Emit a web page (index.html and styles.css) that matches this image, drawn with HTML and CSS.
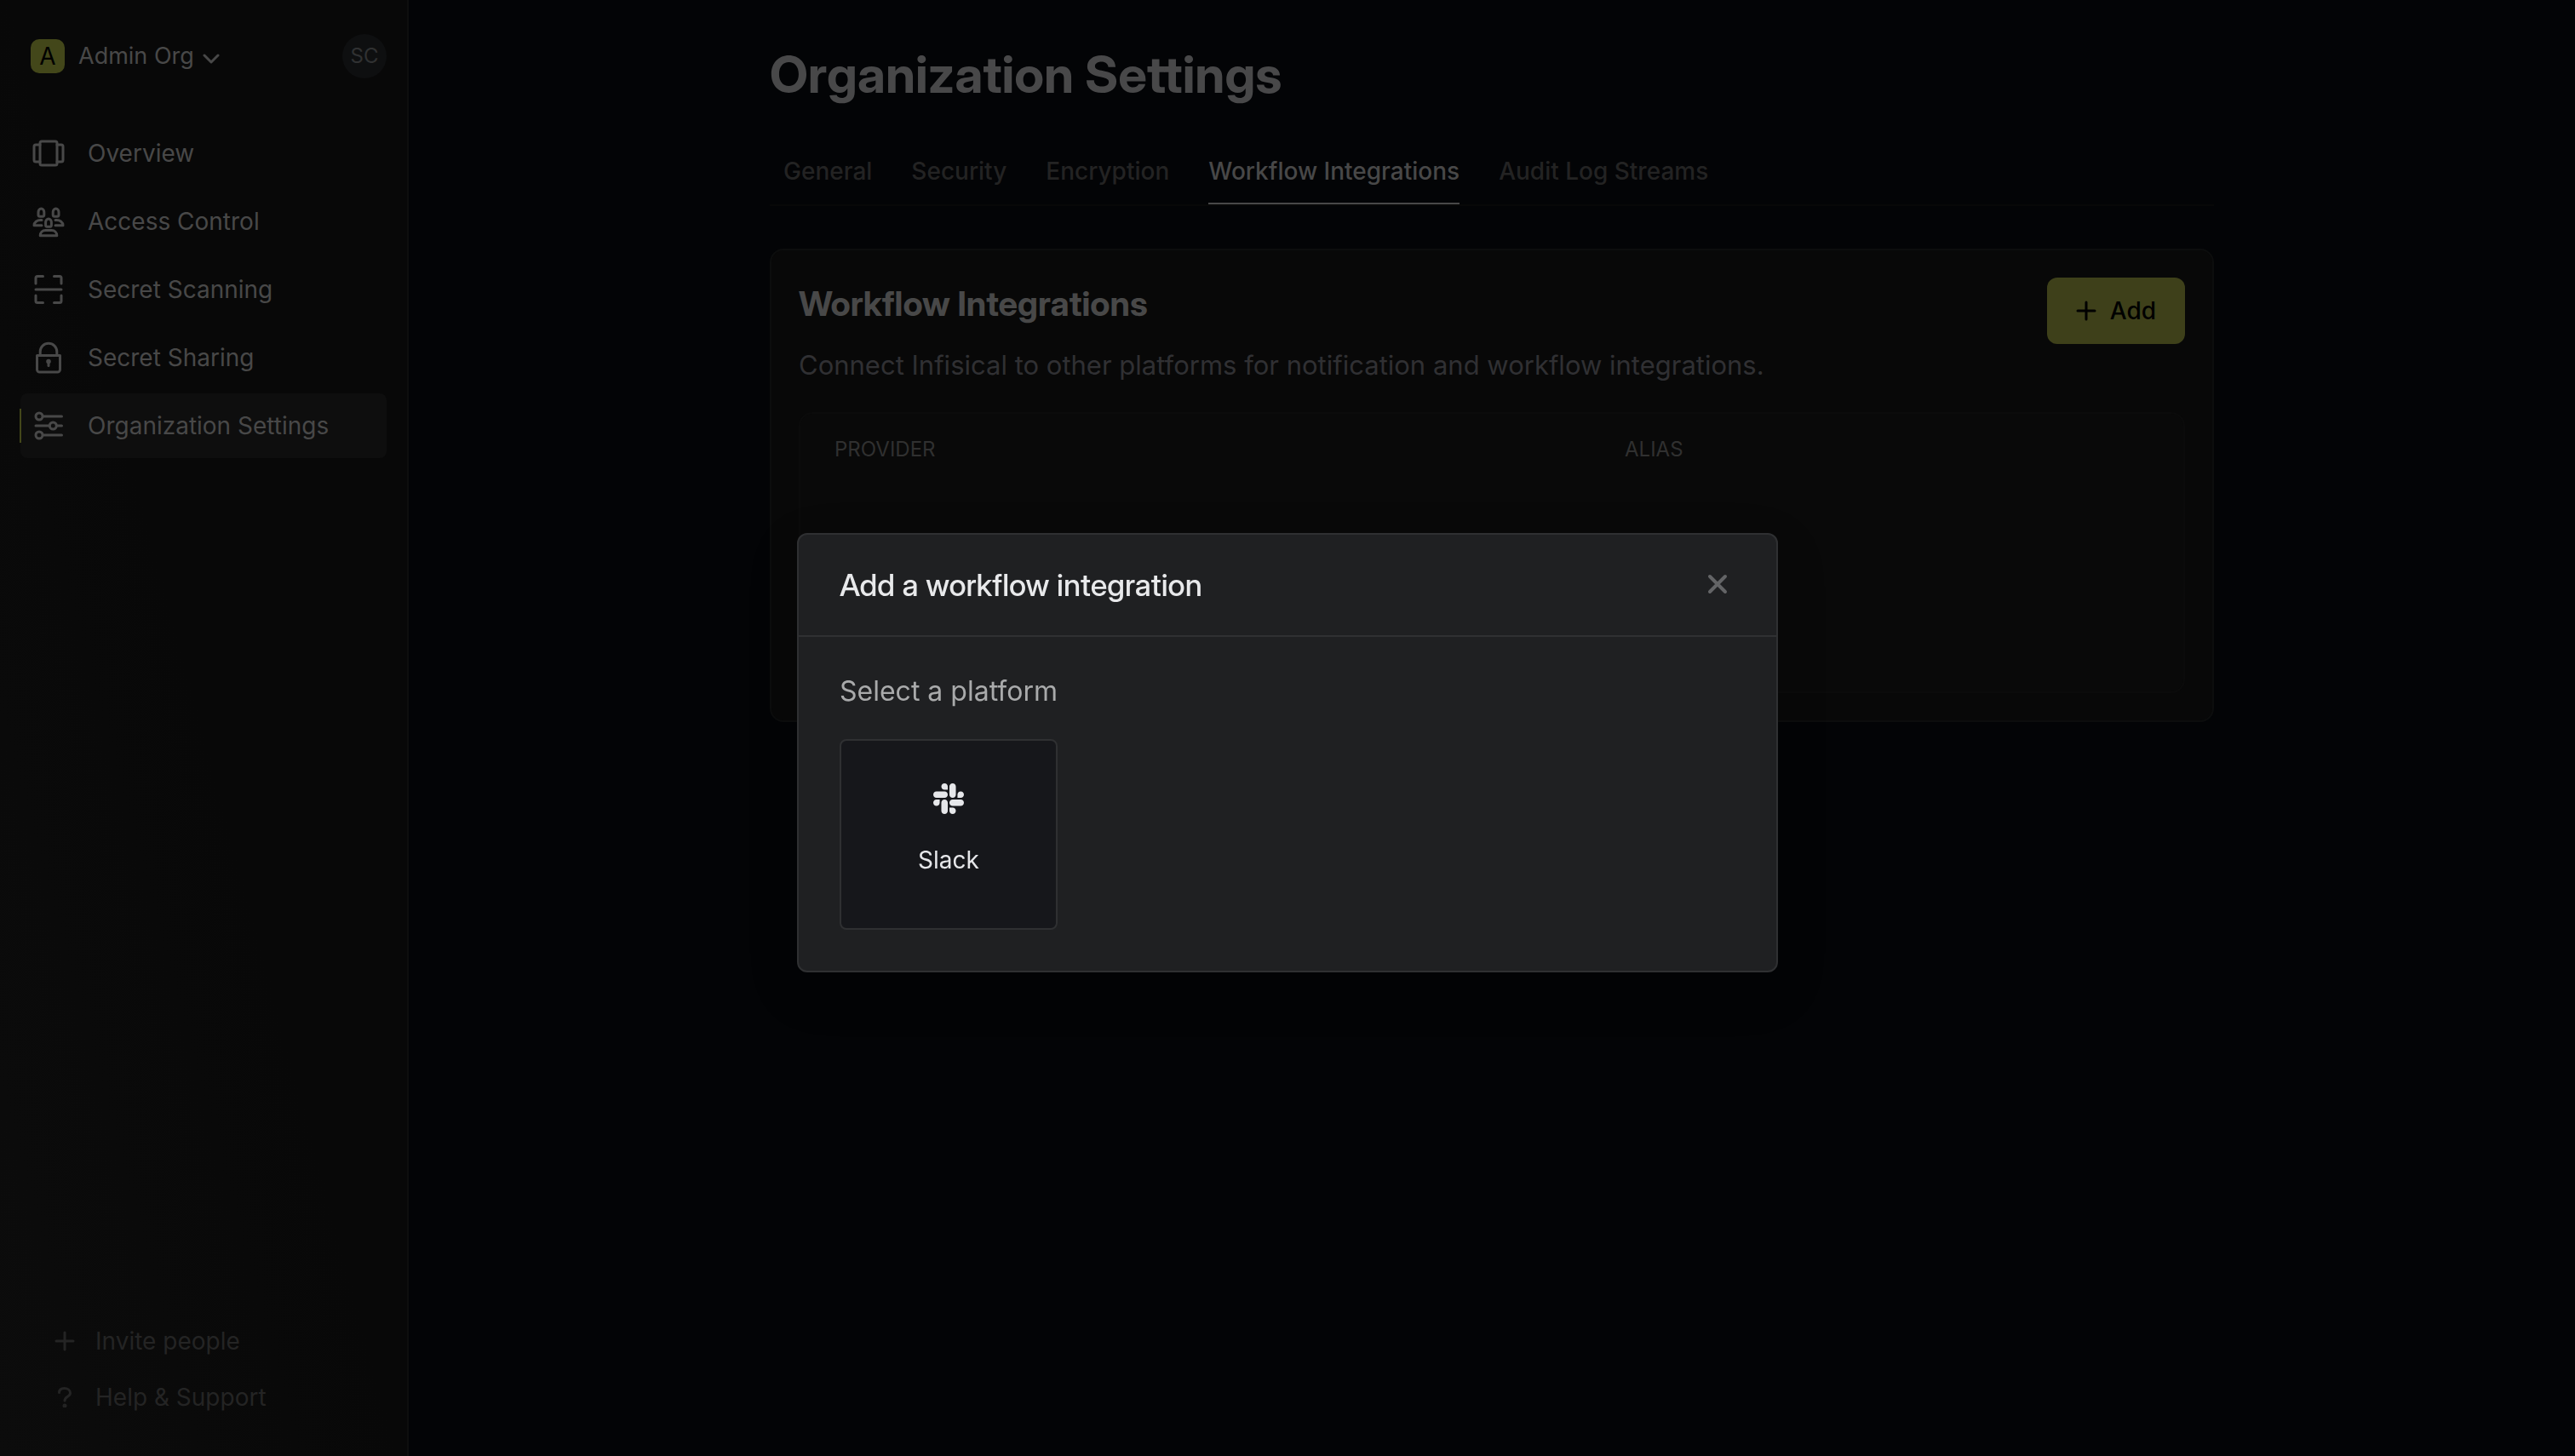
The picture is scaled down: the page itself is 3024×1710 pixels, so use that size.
FILE: index.html
```html
<!DOCTYPE html>
<html lang="en">
<head>
<meta charset="utf-8">
<title>Organization Settings</title>
<link rel="stylesheet" href="styles.css">
</head>
<body>
<div class="app">
  <aside class="sidebar">
    <div class="org">
      <button class="org-switch" type="button">
        <span class="org-badge">A</span>
        <span class="org-name">Admin Org</span>
        <svg class="chevron" viewBox="0 0 20 12"><path d="M2 2l8 8 8-8"/></svg>
      </button>
      <button class="avatar" type="button">SC</button>
    </div>
    <nav class="nav">
      <a class="nav-item" href="#">
        <svg class="nav-icon" viewBox="0 0 42 42"><rect x="11" y="7" width="20" height="28" rx="2"/><path d="M11 11H6a2 2 0 0 0-2 2v16a2 2 0 0 0 2 2h5M31 11h5a2 2 0 0 1 2 2v16a2 2 0 0 1-2 2h-5"/></svg>
        Overview
      </a>
      <a class="nav-item" href="#">
        <svg class="nav-icon" viewBox="0 0 42 42"><path d="M9 10a3.4 4 0 0 1 6.8 0v3.6a1.6 1.6 0 0 1-1.6 1.6h-3.6A1.6 1.6 0 0 1 9 13.6zM26.2 10a3.4 4 0 0 1 6.8 0v3.6a1.6 1.6 0 0 1-1.6 1.6h-3.6a1.6 1.6 0 0 1-1.6-1.6zM17.6 22a3.4 4 0 0 1 6.8 0v3.6a1.6 1.6 0 0 1-1.6 1.6h-3.6a1.6 1.6 0 0 1-1.6-1.6zM13 19.5h-1.5c-4 0-7.5 2.5-7.5 6.3h9M29 19.5h1.5c4 0 7.500 2.500 7.500 6.300h-9M11.200 37.800c0-3.800 2.500-6.300 6.300-6.300h7c3.800 0 6.300 2.500 6.300 6.300z"/></svg>
        Access Control
      </a>
      <a class="nav-item" href="#">
        <svg class="nav-icon" viewBox="0 0 42 42"><path d="M6 14V7.500A2 2 0 0 1 8 5.500h6.500M27.500 5.500H34a2 2 0 0 1 2 2V14M6 28v6.500a2 2 0 0 0 2 2h6.500M27.500 36.500H34a2 2 0 0 0 2-2V28M6 21h30"/></svg>
        Secret Scanning
      </a>
      <a class="nav-item" href="#">
        <svg class="nav-icon" viewBox="0 0 42 42"><path d="M7.500 18.500h27V35a3 3 0 0 1-3 3h-21a3 3 0 0 1-3-3zM11.200 18.500v-4.500a9.800 9.800 0 0 1 19.600 0v4.500"/><circle class="solid" cx="21" cy="25.500" r="1.300"/><path d="M21 26v4.500"/></svg>
        Secret Sharing
      </a>
      <a class="nav-item active" href="#">
        <svg class="nav-icon" viewBox="0 0 42 42"><circle cx="10" cy="10" r="4"/><circle cx="26.300" cy="21" r="4"/><circle cx="10" cy="32" r="4"/><path d="M14.500 10H36.500M6 21H22M30.500 21h6M14.500 32H36.500"/></svg>
        Organization Settings
      </a>
    </nav>
    <div class="sidebar-foot">
      <button class="foot-item" type="button">
        <svg class="foot-icon" viewBox="0 0 24 24"><path d="M12 2v20M2 12h20"/></svg>
        Invite people
      </button>
      <button class="foot-item" type="button">
        <svg class="foot-icon" viewBox="0 0 24 24"><path d="M5.500 6.500C5.500 3 8 1.500 11.500 1.500s7 1.800 7 5.500c0 4.500-6.500 4.200-6.500 9"/><circle class="solid" cx="12" cy="22" r="1"/></svg>
        Help &amp; Support
      </button>
    </div>
  </aside>

  <main class="main">
    <div class="content">
      <h1 class="title">Organization Settings</h1>
      <div class="tabs" role="tablist">
        <button class="tab" type="button" role="tab">General</button>
        <button class="tab" type="button" role="tab">Security</button>
        <button class="tab" type="button" role="tab">Encryption</button>
        <button class="tab selected" type="button" role="tab" aria-selected="true">Workflow Integrations</button>
        <button class="tab" type="button" role="tab">Audit Log Streams</button>
      </div>
      <section class="card">
        <div class="card-head">
          <h2 class="card-title">Workflow Integrations</h2>
          <button class="add" type="button">
            <svg class="foot-icon" viewBox="0 0 24 24"><path d="M12 2v20M2 12h20"/></svg>
            Add
          </button>
        </div>
        <p class="card-text">Connect Infisical to other platforms for notification and workflow integrations.</p>
        <div class="table-wrap">
          <table class="table">
            <thead>
              <tr><th class="col-provider" scope="col">PROVIDER</th><th scope="col">ALIAS</th></tr>
            </thead>
            <tbody>
              <tr><td class="empty" colspan="2"></td></tr>
            </tbody>
          </table>
        </div>
      </section>
    </div>
  </main>
</div>

<div class="overlay">
  <div class="modal" role="dialog" aria-modal="true" aria-labelledby="modal-title">
    <div class="modal-head">
      <h2 class="modal-title" id="modal-title">Add a workflow integration</h2>
      <button class="close" type="button" aria-label="Close">
        <svg class="close-icon" viewBox="0 0 24 24"><path d="M3 3l18 18M21 3L3 21"/></svg>
      </button>
    </div>
    <div class="modal-body">
      <p class="modal-text">Select a platform</p>
      <button class="platform" type="button">
        <svg class="slack" viewBox="0 32 448 448"><path d="M94.120 315.100c0 25.900-21.160 47.060-47.060 47.060S0 341 0 315.100c0-25.900 21.160-47.060 47.060-47.060h47.060v47.060zm23.720 0c0-25.900 21.160-47.060 47.060-47.060s47.060 21.160 47.060 47.060v117.840c0 25.900-21.160 47.060-47.060 47.060s-47.060-21.160-47.060-47.060V315.100zm47.060-188.980c-25.900 0-47.060-21.160-47.060-47.060S139 32 164.900 32s47.060 21.160 47.060 47.060v47.060H164.900zm0 23.720c25.900 0 47.060 21.160 47.060 47.060s-21.160 47.060-47.060 47.060H47.060C21.160 243.960 0 222.800 0 196.900s21.160-47.060 47.060-47.060H164.900zm188.980 47.060c0-25.900 21.160-47.060 47.060-47.060 25.900 0 47.060 21.160 47.060 47.060s-21.160 47.060-47.060 47.060h-47.060V196.900zm-23.720 0c0 25.900-21.160 47.060-47.060 47.060-25.900 0-47.060-21.160-47.060-47.060V79.060c0-25.900 21.160-47.060 47.060-47.060 25.900 0 47.060 21.160 47.060 47.060V196.900zM283.100 385.880c25.900 0 47.060 21.160 47.060 47.060 0 25.900-21.160 47.060-47.060 47.060-25.900 0-47.060-21.160-47.060-47.060v-47.060h47.060zm0-23.720c-25.900 0-47.060-21.160-47.060-47.060 0-25.900 21.160-47.060 47.060-47.060h117.840c25.900 0 47.060 21.160 47.060 47.060 0 25.900-21.160 47.060-47.060 47.060H283.100z"/></svg>
        Slack
      </button>
    </div>
  </div>
</div>
</body>
</html>
```
FILE: styles.css
```css
* {
  box-sizing: border-box;
}

body {
  margin: 0;
  background: #030406;
  color: #484848;
  font-family: Inter, "Liberation Sans", sans-serif;
  font-size: 28px;
  line-height: 40px;
}

h1, h2, p {
  margin: 0;
}

h1, h2 {
  font-family: "Inter Display", Inter, "Liberation Sans", sans-serif;
}

button {
  margin: 0;
  padding: 0;
  border: 0;
  background: none;
  color: inherit;
  font: inherit;
}

a {
  color: inherit;
  text-decoration: none;
}

svg {
  flex: none;
  fill: none;
  stroke: currentColor;
  stroke-linecap: round;
  stroke-linejoin: round;
}

.solid {
  fill: currentColor;
}

.app {
  display: flex;
  min-height: 100vh;
}

/* Sidebar */
.sidebar {
  display: flex;
  flex: none;
  flex-direction: column;
  width: 480px;
  padding: 40px 24px 36px;
  border-right: 2px solid #0e0e0e;
  background: linear-gradient(75deg, #0c0c0c, #080808 50%, #080808);
}

.org {
  display: flex;
  align-items: center;
  justify-content: space-between;
  margin-bottom: 50px;
  padding-left: 12px;
}

.org-switch {
  display: flex;
  align-items: center;
}

.org-badge {
  width: 40px;
  height: 40px;
  margin-right: 16px;
  border-radius: 10px;
  background: #43471a;
  color: #000;
}

.org-name {
  margin-right: 10px;
  font-size: 27px;
}

.chevron {
  width: 20px;
  height: 12px;
  margin-top: 6px;
  stroke-width: 3;
}

.avatar {
  width: 52px;
  height: 52px;
  border-radius: 50%;
  background: #0e0f10;
  color: #303132;
  font-size: 24px;
}

.nav {
  display: flex;
  flex-direction: column;
  gap: 4px;
}

.nav-item {
  position: relative;
  display: flex;
  align-items: center;
  gap: 25px;
  height: 76px;
  padding: 0 12px;
  border-radius: 8px;
}

.nav-item.active {
  background: #0e0e0e;
}

.nav-item.active::before {
  position: absolute;
  top: 18px;
  left: -1px;
  width: 2px;
  height: 40px;
  background: #43471a;
  content: "";
}

.nav-icon {
  width: 42px;
  height: 42px;
  stroke-width: 3;
}

.sidebar-foot {
  display: flex;
  flex-direction: column;
  align-items: flex-start;
  margin-top: auto;
  padding-left: 40px;
  color: #242424;
}

.foot-item {
  display: flex;
  align-items: center;
  gap: 24px;
  height: 66px;
}

.foot-icon {
  width: 24px;
  height: 24px;
  stroke-width: 3;
}

/* Page */
.main {
  flex: 1;
  min-width: 0;
}

.content {
  max-width: 1696px;
  margin: 0 auto;
  padding-top: 52px;
}

.title {
  margin-bottom: 40px;
  color: #484849;
  font-size: 60px;
  font-weight: 700;
  line-height: 70px;
}

.tabs {
  display: flex;
  gap: 46px;
  margin-bottom: 50px;
  padding-left: 16px;
  border-bottom: 2px solid #080808;
}

.tab {
  height: 78px;
  padding-top: 2px;
  border-bottom: 2px solid transparent;
  color: #232323;
  font-weight: 500;
}

.tab.selected {
  border-color: #484848;
  color: #484848;
}

.card {
  padding: 32px;
  border: 2px solid #0c0d0d;
  border-radius: 16px;
  background: #080808;
}

.card-head {
  display: flex;
  align-items: flex-start;
  justify-content: space-between;
}

.card-title {
  font-size: 40px;
  font-weight: 700;
  line-height: 62px;
}

.add {
  display: flex;
  align-items: center;
  gap: 16px;
  height: 78px;
  padding: 0 34px;
  border-radius: 12px;
  background: #3e401a;
  color: #000;
  font-weight: 500;
}

.card-text {
  margin-bottom: 30px;
  color: #303033;
  font-size: 31px;
  line-height: 50px;
}

.table-wrap {
  border: 2px solid #0b0b0b;
  border-radius: 16px;
  background: #090909;
}

.table {
  width: 100%;
  border-collapse: collapse;
  table-layout: fixed;
}

.table th {
  height: 82px;
  padding: 2px 40px 0;
  color: #303030;
  font-size: 24px;
  font-weight: 400;
  text-align: left;
}

.table .col-provider {
  width: calc(400% / 7);
}

.empty {
  height: 244px;
  padding: 0;
}

/* Dialog */
.overlay {
  position: fixed;
  inset: 0;
  display: flex;
  align-items: center;
  justify-content: center;
  padding-top: 58px;
}

.modal {
  width: 1152px;
  border: 2px solid #2f3032;
  border-radius: 12px;
  background: #1f2022;
  box-shadow: 0 20px 60px rgba(0, 0, 0, 0.15);
}

.modal-head {
  display: flex;
  align-items: center;
  justify-content: space-between;
  height: 120px;
  padding: 0 48px;
  border-bottom: 2px solid #2f3032;
}

.modal-title {
  color: #e8e9eb;
  font-size: 36px;
  font-weight: 500;
  line-height: 48px;
}

.close {
  display: flex;
  align-items: center;
  justify-content: center;
  width: 42px;
  height: 42px;
  padding-bottom: 2px;
  color: #636466;
}

.close-icon {
  width: 24px;
  height: 24px;
  stroke-width: 4;
}

.modal-body {
  padding: 40px 48px 48px;
}

.modal-text {
  margin-bottom: 32px;
  color: #a9aaab;
  font-size: 32px;
  line-height: 48px;
}

.platform {
  display: flex;
  flex-direction: column;
  align-items: center;
  gap: 34px;
  width: 256px;
  height: 224px;
  padding-top: 50px;
  border: 2px solid #2f3032;
  border-radius: 8px;
  background: #16171b;
  color: #e6e7ea;
}

.slack {
  width: 36px;
  height: 36px;
  fill: currentColor;
  stroke: none;
}
```
